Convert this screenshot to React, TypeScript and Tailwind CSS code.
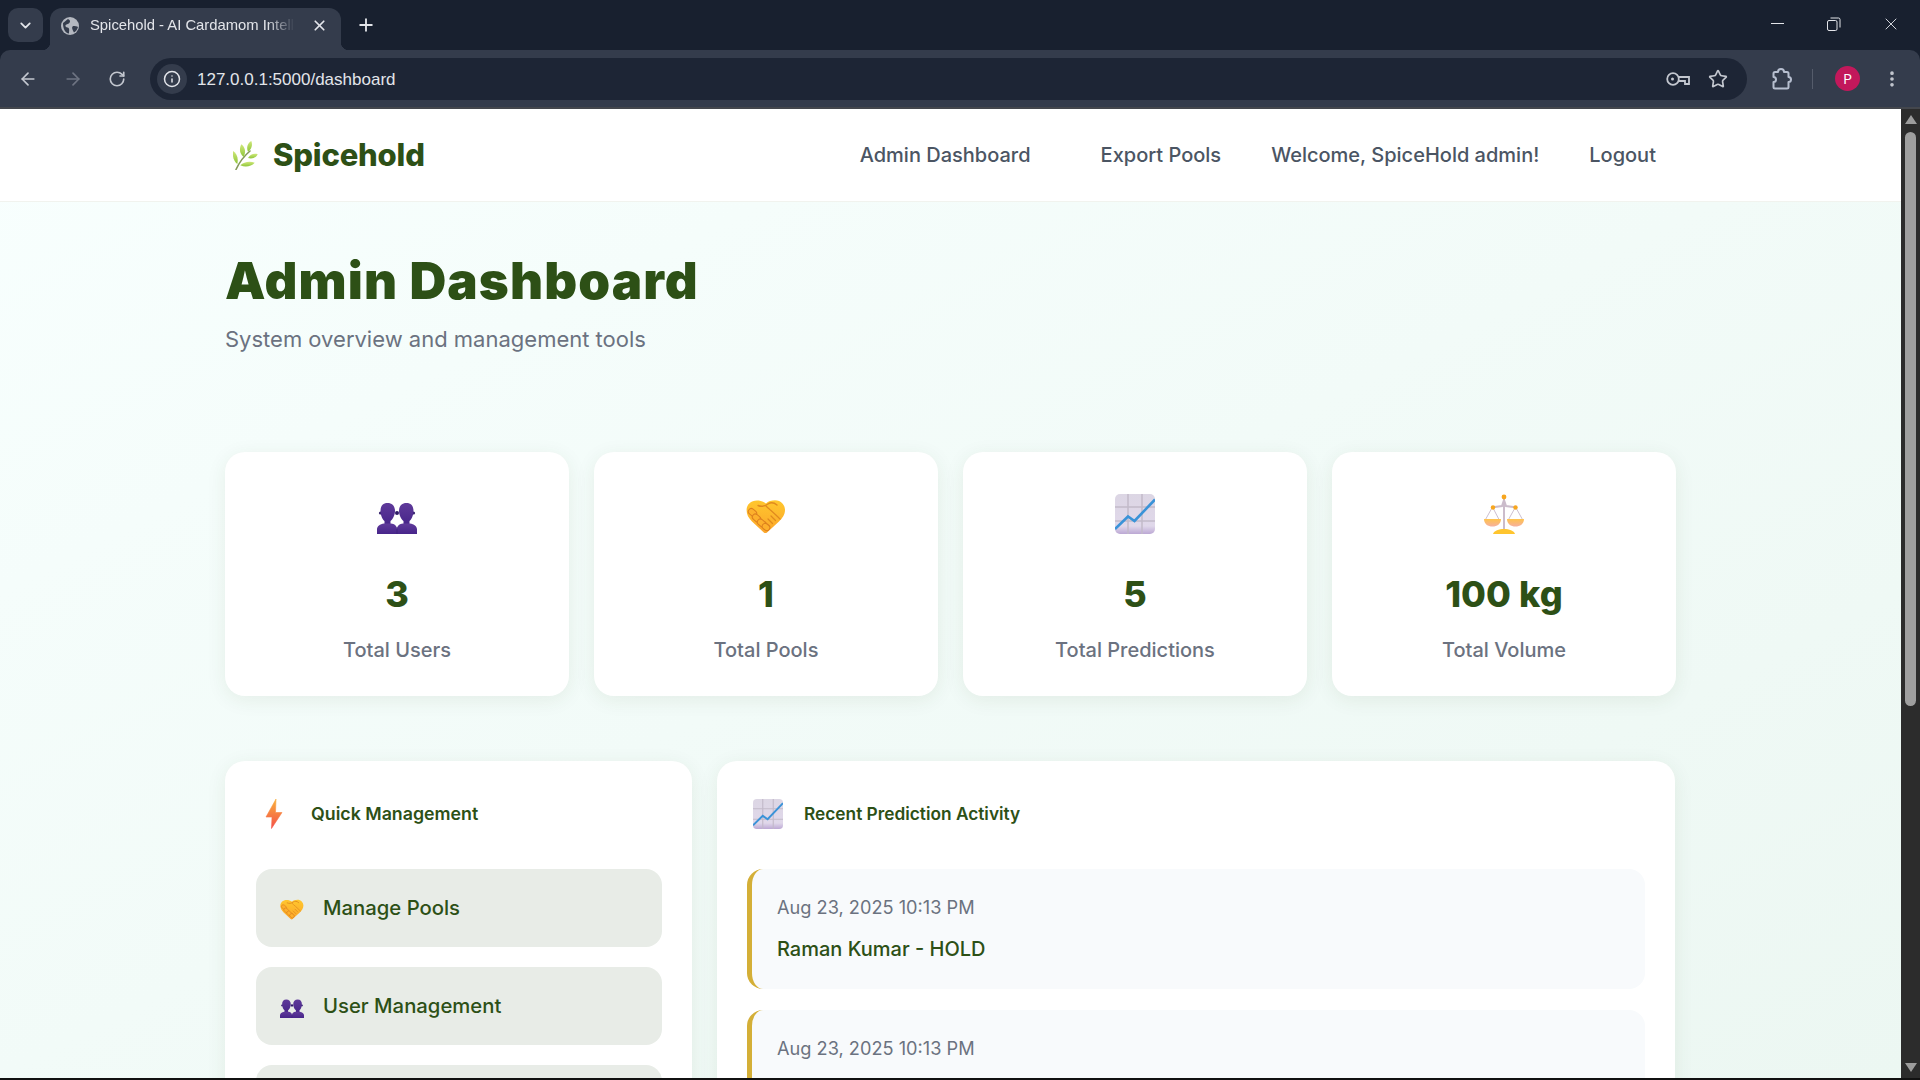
import { ArrowLeft, ArrowRight, ChevronDown, Info, MoreVertical, Plus, RotateCw, Star, X } from 'lucide-react';

const headingFont = "font-['Inter','Liberation_Sans',sans-serif]";

function UsersEmoji({ size }: { size: number }) {
  return (
    <svg width={size} height={size} viewBox="0 0 40 40" className="shrink-0">
      <defs>
        <linearGradient id="usr" x1="0" y1="0" x2="0" y2="1">
          <stop offset="0" stopColor="#5f3a9a" />
          <stop offset="1" stopColor="#47258a" />
        </linearGradient>
      </defs>
      <circle cx="3.500" cy="19" r="1.600" fill="#34206c" />
      <circle cx="36.500" cy="19" r="1.600" fill="#34206c" />
      <circle cx="20" cy="19" r="2" fill="#2e1a66" />
      <path d="M3.500 17C3.500 12 6 9 10.500 9s7.500 3 7.500 8c0 5-3 9-4.500 10v3.500H7.500V27c-1.500-1-4-5-4-10z" fill="url(#usr)" />
      <path d="M22 17c0-5 3-8 7.500-8s7 3 7 8c0 5-2.500 9-4 10v3.500h-6V27c-1.500-1-4.500-5-4.500-10z" fill="url(#usr)" />
      <path d="M0 40v-4.500C0 32 3 30 7 29.500h7c3.500.5 6 2 6 6V40zM20 40v-4.500c0-4 2.500-5.500 6-6h7c4 .5 7 2.500 7 6V40z" fill="url(#usr)" />
      <path d="M20 33v7" stroke="#3b2078" strokeWidth="0.700" />
    </svg>
  );
}

function HandshakeEmoji({ size }: { size: number }) {
  return (
    <svg width={size} height={size} viewBox="0 0 40 40" className="shrink-0">
      <defs>
        <linearGradient id="hnd" x1="0" y1="0" x2="0" y2="1">
          <stop offset="0" stopColor="#ffc72e" />
          <stop offset="1" stopColor="#fba52a" />
        </linearGradient>
      </defs>
      <path d="M11 6.500c3.500 0 6.500 1 9 3 2-2 5.500-3.200 9-3.200 6 0 10 4.600 10 9.700 0 5-3 8.500-6 11.500L21 38.500c-1 .8-2.200.8-3.200 0L6 27.500C2.500 24 .6 20.500.6 16 .6 10.500 5 6.500 11 6.500z" fill="url(#hnd)" />
      <path d="M12 11.500c3.500 1.500 6.500 1 10-1.500 3-2 6-1.500 9 1" fill="none" stroke="#e08a1e" strokeWidth="1.400" strokeLinecap="round" />
      <path d="M20 12c3 3 8 7 14 13M25 22l4.500 4.500M22 25l4.500 4.500M19 28l4 4" fill="none" stroke="#e08a1e" strokeWidth="1.200" strokeLinecap="round" />
      <g fill="#fdb02c" stroke="#dc7f1e" strokeWidth="1">
        <rect x="2" y="15.500" width="9" height="6" rx="3" transform="rotate(38 6.500 18.500)" />
        <rect x="6" y="21" width="9" height="6" rx="3" transform="rotate(38 10.500 24)" />
        <rect x="11" y="26" width="9" height="6" rx="3" transform="rotate(38 15.500 29)" />
        <rect x="16" y="30" width="8" height="6" rx="3" transform="rotate(38 20 33)" />
      </g>
    </svg>
  );
}

function ChartEmoji({ size }: { size: number }) {
  return (
    <svg width={size} height={size} viewBox="0 0 40 40" className="shrink-0">
      <defs>
        <linearGradient id="chr" x1="0" y1="0" x2="0" y2="1">
          <stop offset="0" stopColor="#dcd6e4" />
          <stop offset="0.8" stopColor="#e0d8ea" />
          <stop offset="1" stopColor="#bca8d4" />
        </linearGradient>
      </defs>
      <rect width="40" height="40" rx="5" fill="url(#chr)" />
      <path d="M13 0v40M27 0v40M0 13h40M0 27h40" stroke="#c2bac9" strokeWidth="1.500" />
      <path d="M0 35 13 22.500l6.500 4.500L40 5.500" fill="none" stroke="#3a93d8" strokeWidth="2.600" />
    </svg>
  );
}

function ScalesEmoji({ size }: { size: number }) {
  return (
    <svg width={size} height={size} viewBox="0 0 40 40" className="shrink-0">
      <defs>
        <linearGradient id="pan" x1="0" y1="0" x2="0" y2="1">
          <stop offset="0" stopColor="#ffc34a" />
          <stop offset="1" stopColor="#f6b0a0" />
        </linearGradient>
      </defs>
      <path d="M20 3v33M20 6l2 6 11 1.500M20 6l-2 6-11 1.500" fill="none" stroke="#cbbccb" strokeWidth="2" />
      <path d="M8.500 13 1.500 25.500M8.500 13l6.500 12.500M31.500 13l-7 12.500M31.500 13 38.500 25.500" fill="none" stroke="#cdbfd0" strokeWidth="1" />
      <path d="M0 25h17c0 5-4 7.500-8.500 7.500S0 30 0 25zM23 25h17c0 5-4 7.500-8.500 7.500S23 30 23 25z" fill="url(#pan)" />
      <path d="M9 40c1-3.500 6-5 11-5s10 1.500 11 5z" fill="#ffc52e" />
      <circle cx="20" cy="3" r="2.400" fill="#f7a61e" />
      <circle cx="9" cy="13.500" r="2.200" fill="#f7a61e" />
      <circle cx="31.500" cy="13.500" r="2.200" fill="#f7a61e" />
    </svg>
  );
}

function BoltEmoji() {
  return (
    <svg width="20" height="30" viewBox="0 0 20 30" className="shrink-0">
      <defs>
        <linearGradient id="blt" x1="0" y1="0" x2="0" y2="1">
          <stop offset="0" stopColor="#f9b03a" />
          <stop offset="1" stopColor="#f4504a" />
        </linearGradient>
      </defs>
      <path d="M11 0 1 18h6l-.5 11.500L17 13.500h-6.500z" fill="url(#blt)" stroke="url(#blt)" strokeWidth="0.600" strokeLinejoin="round" />
    </svg>
  );
}

function SprigEmoji() {
  return (
    <svg width="25" height="29" viewBox="0 0 25 29" className="shrink-0">
      <defs>
        <linearGradient id="lf" x1="0" y1="0" x2="0" y2="1">
          <stop offset="0" stopColor="#cfe87a" />
          <stop offset="1" stopColor="#8fc63a" />
        </linearGradient>
      </defs>
      <path d="M3 28.500C6 22 11 15 17 10" fill="none" stroke="#84985a" strokeWidth="1.600" strokeLinecap="round" />
      <g fill="url(#lf)">
        <path d="M15 10.700C13 6 15 2 18.300 0c1.500 4 .5 8-3.300 10.700z" />
        <path d="M10.700 16C6.500 13 6 8 8.300 3.300c3.500 2.500 5 7.500 2.400 12.700z" />
        <path d="M4.300 23C.5 20-.7 15 0 10c3.500 2 5.800 7 4.300 13z" />
        <path d="M15 17c2-3.500 6-5 9.700-3.700-1.700 3.500-5.700 5-9.700 3.700z" />
        <path d="M7.300 24.300c3.500-3.500 9.500-4.500 14.400-2.600-3.500 4-9.500 4.800-14.400 2.600z" />
      </g>
    </svg>
  );
}

function StatCard({ icon, value, label }: { icon: React.ReactNode; value: string; label: string }) {
  return (
    <div className="flex h-[244px] w-[344px] flex-col items-center rounded-[20px] bg-white pt-[42px] shadow-[0_4px_20px_rgba(45,80,22,0.08)]">
      <div className="flex h-10 items-center">{icon}</div>
      <div className={`${headingFont} mt-[30px] text-[36px] leading-[60px] font-extrabold tracking-[0.1px] text-[#2d5016]`}>{value}</div>
      <div className="mt-[11px] text-[20px] leading-[30px] font-medium text-[#6b7280]">{label}</div>
    </div>
  );
}

function ActionRow({ icon, label }: { icon: React.ReactNode; label: string }) {
  return (
    <div className="flex h-[78px] items-center gap-[19px] rounded-[16px] bg-[#e8ece7] pl-[24px] text-[20.300px] font-medium text-[#2d5016]">
      {icon}
      <span>{label}</span>
    </div>
  );
}

function ActivityRow({ date, name }: { date: string; name?: string }) {
  return (
    <div className="h-[120px] rounded-[16px] border-l-[5px] border-[#d4af37] bg-[#f8fafc] pl-[25px] pt-[23px]">
      <div className="text-[18.200px] leading-[30px] text-[#6b7280]">{date}</div>
      {name && <div className="mt-[12px] text-[20px] leading-[30px] font-medium text-[#2d5016]">{name}</div>}
    </div>
  );
}

function BrowserChrome() {
  return (
    <div className="h-[109px] shrink-0 bg-[#18202f] font-['Open_Sans',sans-serif]">
      <div className="flex h-[50px] items-end">
        <div className="mb-[8px] ml-[8px] flex h-[34px] w-[35px] items-center justify-center rounded-[10px] bg-[#343c4c] text-[#e3e5ea]">
          <ChevronDown size={17} strokeWidth={2.500} />
        </div>
        <div className="relative ml-[7px] flex h-[42px] w-[291px] items-center rounded-t-[12px] bg-[#343c4c] pb-[7px] pl-[11px] text-[#e3e5ea]">
          <span className="absolute bottom-0 left-[-8px] h-2 w-2 bg-[radial-gradient(circle_at_0_0,#18202f_8px,#343c4c_8.500px)]" />
          <span className="absolute bottom-0 right-[-8px] h-2 w-2 bg-[radial-gradient(circle_at_100%_0,#18202f_8px,#343c4c_8.500px)]" />
          <svg width="18" height="18" viewBox="0 0 18 18" className="shrink-0">
            <circle cx="9" cy="9" r="9" fill="#b4b8c0" />
            <path d="M2 6c2-1 3-3 5-4 1 1 2 1 2 2.500S7 7 5.500 7.500 4 10 6.500 10.500 8 14 8 16.500C4 16 2 12 2 6zM12 9c2 0 4 0 5 1-.5 2-2 4.500-4 5.500-1-2-3-5-1-6.500z" fill="#343c4c" />
          </svg>
          <span className="ml-[11px] w-[211px] overflow-hidden text-[14.800px] whitespace-nowrap font-['Liberation_Sans',sans-serif] [mask-image:linear-gradient(to_right,black_84%,transparent_97%)]">
            Spicehold - AI Cardamom Intelligence
          </span>
          <X size={17} strokeWidth={2.400} className="ml-[10px] shrink-0" />
        </div>
        <Plus size={20} strokeWidth={2.200} className="mb-[15px] ml-[15px] text-[#e3e5ea]" />
        <div className="mb-[26px] ml-auto h-px w-[13px] bg-[#e3e5ea]" />
        <svg width="14" height="14" viewBox="0 0 14 14" className="mb-[19px] ml-[43px]" fill="none" stroke="#e3e5ea">
          <rect x="0.500" y="3.500" width="9.500" height="10" rx="1.500" />
          <path d="M3.500 1h8A1.500 1.500 0 0 1 13 2.500v8" />
        </svg>
        <X size={20} strokeWidth={1.100} className="mb-[16px] ml-[40px] mr-[19px] text-[#e3e5ea]" />
      </div>
      <div className="flex h-[57px] items-center rounded-t-[10px] bg-[#343c4c] text-[#c3c7cf]">
        <ArrowLeft size={20} className="ml-[18px]" />
        <ArrowRight size={20} className="ml-[25px] text-[#6e7482]" />
        <RotateCw size={18} strokeWidth={2.200} className="ml-[25px]" />
        <div className="ml-[24px] flex h-[42px] w-[1597px] items-center rounded-full bg-[#1d2535] pl-[7px]">
          <div className="flex h-[30px] w-[30px] items-center justify-center rounded-full bg-[#343c4c]">
            <Info size={18} className="text-[#e3e5ea]" />
          </div>
          <span className="ml-[10px] pt-[2px] font-['Liberation_Sans',sans-serif] text-[17px] text-[#e3e5ea]">127.0.0.1:5000/dashboard</span>
          <svg width="24" height="14" viewBox="0 0 24 14" className="ml-auto" fill="none" stroke="#c3c7cf" strokeWidth="1.800">
            <circle cx="7" cy="7" r="5.800" />
            <circle cx="6.500" cy="7" r="1.500" fill="#c3c7cf" stroke="none" />
            <path d="M12.500 5H23v7h-4V9h-6.500" />
          </svg>
          <Star size={20} strokeWidth={2} className="ml-[18px] mr-[19px]" />
        </div>
        <svg width="24" height="24" viewBox="0 0 24 24" className="ml-[22px]" fill="none" stroke="#b7bfd0" strokeWidth="2" strokeLinejoin="round">
          <path d="M9 5a3 3 0 0 1 6 0h3a1.500 1.500 0 0 1 1.500 1.500V10a2.500 2.500 0 0 1 0 5v5a1.500 1.500 0 0 1-1.500 1.500H6A1.500 1.500 0 0 1 4.500 20v-5a2.500 2.500 0 0 0 0-5V6.500A1.500 1.500 0 0 1 6 5z" />
        </svg>
        <div className="ml-[19px] h-[20px] w-px bg-[#555c6b]" />
        <div className="ml-[22px] flex h-[25px] w-[25px] items-center justify-center rounded-full bg-[#c2185b] text-[15px] text-white">P</div>
        <MoreVertical size={20} strokeWidth={2.400} className="ml-[22px]" />
      </div>
      <div className="h-[2px] bg-[#44474d]" />
    </div>
  );
}

function Scrollbar() {
  return (
    <div className="flex w-[19px] shrink-0 flex-col items-center bg-[#2c2c2c]">
      <div className="mt-[6px] h-0 w-0 border-x-[6px] border-b-[9px] border-x-transparent border-b-[#9c9c9c]" />
      <div className="mt-[8px] h-[574px] w-[11px] rounded-full bg-[#9f9f9f]" />
      <div className="mt-auto mb-[6px] h-0 w-0 border-x-[6px] border-t-[9px] border-x-transparent border-t-[#9c9c9c]" />
    </div>
  );
}

export default function App() {
  return (
    <div className="flex h-screen flex-col overflow-hidden bg-[#111] font-['Inter',sans-serif]">
      <BrowserChrome />
      <div className="flex min-h-0 flex-1">
        <div className="min-w-0 flex-1 overflow-hidden bg-gradient-to-br from-[#f8fffe] to-[#ecf7f2]">
          <nav className="flex h-[93px] items-center border-b border-[#f1f3ee] bg-white pl-[233px]">
            <SprigEmoji />
            <span className={`${headingFont} ml-[15px] text-[31px] font-extrabold tracking-[-0.2px] text-[#2d5016]`}>Spicehold</span>
            <div className="ml-[435px] flex text-[20px] font-medium text-[#4b5563]">
              <span>Admin Dashboard</span>
              <span className="ml-[70px]">Export Pools</span>
              <span className="ml-[50px]">Welcome, SpiceHold admin!</span>
              <span className="ml-[50px]">Logout</span>
            </div>
          </nav>

          <main className="ml-[225px] w-[1452px]">
            <h1 className={`${headingFont} mt-[43px] text-[51px] leading-[72px] font-black tracking-[1.100px] text-[#2d5016]`}>Admin Dashboard</h1>
            <p className="mt-[6px] text-[22px] leading-[33px] text-[#6b7280]">System overview and management tools</p>

            <div className="mt-[96px] flex gap-[25px]">
              <StatCard icon={<UsersEmoji size={40} />} value="3" label="Total Users" />
              <StatCard icon={<HandshakeEmoji size={40} />} value="1" label="Total Pools" />
              <StatCard icon={<ChartEmoji size={40} />} value="5" label="Total Predictions" />
              <StatCard icon={<ScalesEmoji size={40} />} value="100 kg" label="Total Volume" />
            </div>

            <div className="mt-[65px] flex gap-[25px]">
              <section className="h-[500px] w-[467px] rounded-[20px] bg-white pl-[31px] pr-[30px] pt-[38px] shadow-[0_4px_20px_rgba(45,80,22,0.08)]">
                <div className="flex h-[30px] items-center">
                  <span className="ml-[9px]"><BoltEmoji /></span>
                  <h2 className={`${headingFont} ml-[26px] text-[17.800px] font-semibold text-[#2d5016]`}>Quick Management</h2>
                </div>
                <div className="mt-[40px] flex flex-col gap-[20px]">
                  <ActionRow icon={<HandshakeEmoji size={24} />} label="Manage Pools" />
                  <ActionRow icon={<UsersEmoji size={24} />} label="User Management" />
                  <div className="h-[78px] rounded-[16px] bg-[#e8ece7]" />
                </div>
              </section>
              <section className="h-[500px] w-[958px] rounded-[20px] bg-white px-[30px] pt-[38px] shadow-[0_4px_20px_rgba(45,80,22,0.08)]">
                <div className="flex h-[30px] items-center">
                  <span className="ml-[6px]"><ChartEmoji size={30} /></span>
                  <h2 className={`${headingFont} ml-[21px] text-[17.300px] font-semibold text-[#2d5016]`}>Recent Prediction Activity</h2>
                </div>
                <div className="mt-[40px] flex flex-col gap-[21px]">
                  <ActivityRow date="Aug 23, 2025 10:13 PM" name="Raman Kumar - HOLD" />
                  <ActivityRow date="Aug 23, 2025 10:13 PM" />
                </div>
              </section>
            </div>
          </main>
        </div>
        <Scrollbar />
      </div>
      <div className="h-[2px] shrink-0 bg-[#111]" />
    </div>
  );
}
